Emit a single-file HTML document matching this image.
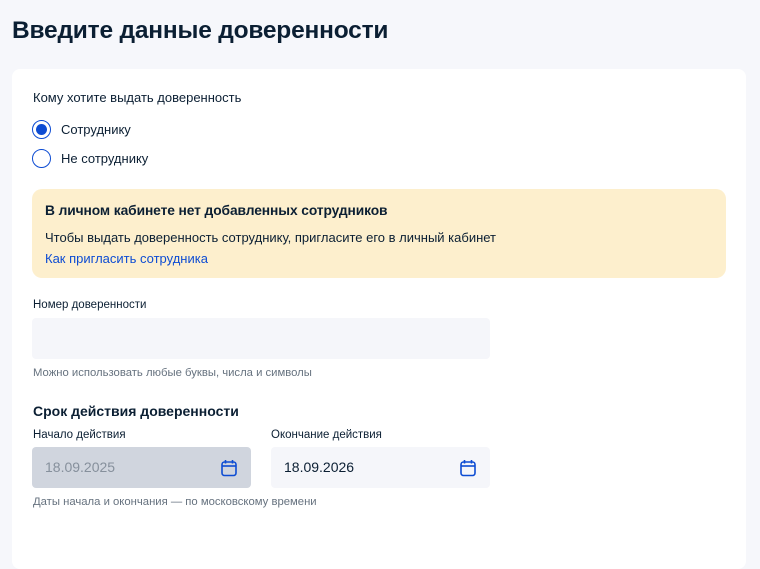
<!DOCTYPE html>
<html><head><meta charset="utf-8"><style>
*{box-sizing:border-box;margin:0;padding:0}
body{width:760px;height:538px;overflow:hidden;background:#f6f7fb;font-family:"Liberation Sans",sans-serif;color:#0b1f33;position:relative}
.abs{position:absolute}
h1{position:absolute;left:12px;top:17px;font-size:24.5px;font-weight:bold;color:#0b1f33;letter-spacing:-0.2px}
.card{position:absolute;left:12px;top:69px;width:734px;height:500px;background:#fff;border-radius:8px}
.t14{font-size:13px}
.radio{position:absolute;left:32px;width:19px;height:19px;border:1.5px solid #0d4cd3;border-radius:50%}
.radio.on::after{content:"";position:absolute;left:2.5px;top:2.5px;width:11px;height:11px;border-radius:50%;background:#0d4cd3}
.alert{position:absolute;left:32px;top:189px;width:694px;height:89px;background:#fdefcd;border-radius:10px}
.inp{position:absolute;height:41px;background:#f5f6fa;border-radius:4px}
.hint{font-size:11.3px;color:#66727f}
.lbl{font-size:11.5px}
.cal{position:absolute;right:14px;top:12px}
</style></head><body>
<h1>Введите данные доверенности</h1>
<div class="card"></div>
<div class="abs t14" style="left:33px;top:90px">Кому хотите выдать доверенность</div>
<div class="radio on" style="top:120px"></div>
<div class="abs t14" style="left:61px;top:122px">Сотруднику</div>
<div class="radio" style="top:149px"></div>
<div class="abs t14" style="left:61px;top:151px">Не сотруднику</div>
<div class="alert"></div>
<div class="abs" style="left:45px;top:203px;font-size:13.8px;font-weight:bold;letter-spacing:-0.1px">В личном кабинете нет добавленных сотрудников</div>
<div class="abs t14" style="left:45px;top:230px">Чтобы выдать доверенность сотруднику, пригласите его в личный кабинет</div>
<div class="abs t14" style="left:45px;top:251px;color:#0d4cd3">Как пригласить сотрудника</div>
<div class="abs lbl" style="left:33px;top:299px">Номер доверенности</div>
<div class="inp" style="left:32px;top:318px;width:458px"></div>
<div class="abs hint" style="left:33px;top:367px">Можно использовать любые буквы, числа и символы</div>
<div class="abs" style="left:33px;top:403px;font-size:14px;font-weight:bold">Срок действия доверенности</div>
<div class="abs lbl" style="left:33px;top:429px">Начало действия</div>
<div class="abs lbl" style="left:271px;top:429px">Окончание действия</div>
<div class="inp" style="left:32px;top:447px;width:219px;background:#d0d5de">
<div class="abs" style="left:13px;top:12px;font-size:14px;color:#86909c">18.09.2025</div>
<svg class="cal" width="16" height="18" viewBox="0 0 16 18"><rect x="1" y="3" width="14" height="13.5" rx="2.5" fill="none" stroke="#0d4cd3" stroke-width="1.6"/><line x1="1" y1="7" x2="15" y2="7" stroke="#0d4cd3" stroke-width="1.6"/><line x1="4.5" y1="1" x2="4.5" y2="4.5" stroke="#0d4cd3" stroke-width="1.6"/><line x1="11.5" y1="1" x2="11.5" y2="4.5" stroke="#0d4cd3" stroke-width="1.6"/></svg>
</div>
<div class="inp" style="left:271px;top:447px;width:219px">
<div class="abs" style="left:13px;top:12px;font-size:14px;color:#0b1f33">18.09.2026</div>
<svg class="cal" width="16" height="18" viewBox="0 0 16 18"><rect x="1" y="3" width="14" height="13.5" rx="2.5" fill="none" stroke="#0d4cd3" stroke-width="1.6"/><line x1="1" y1="7" x2="15" y2="7" stroke="#0d4cd3" stroke-width="1.6"/><line x1="4.5" y1="1" x2="4.5" y2="4.5" stroke="#0d4cd3" stroke-width="1.6"/><line x1="11.5" y1="1" x2="11.5" y2="4.5" stroke="#0d4cd3" stroke-width="1.6"/></svg>
</div>
<div class="abs hint" style="left:33px;top:496px">Даты начала и окончания — по московскому времени</div>
</body></html>
